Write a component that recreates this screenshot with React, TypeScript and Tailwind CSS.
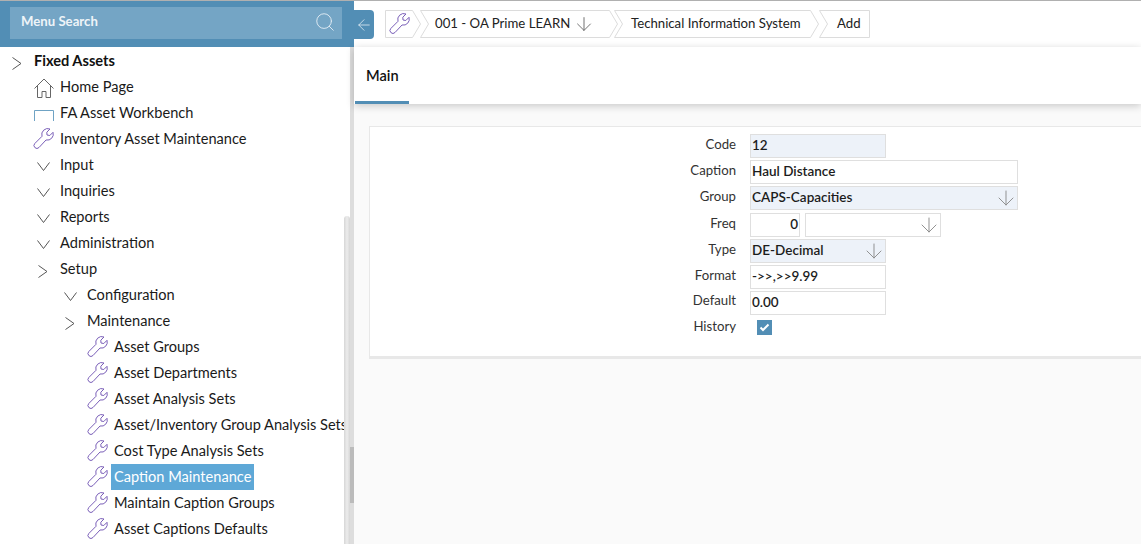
import React from "react";
import { ArrowDown, ArrowLeft, Search } from "lucide-react";

function WrenchIcon({ className }: { className?: string }) {
  return (
    <svg width="21" height="22" viewBox="0 0 21 22" fill="none" stroke="#7a5fb8" strokeWidth="1" className={`shrink-0 ${className ?? ""}`}>
      <path d="M17 1 L13.8 4.2 L14 7 L16.8 7.5 L20 4.3 A6 6 0 0 1 13 12 L6 19.5 A2.6 2.6 0 0 1 1.8 15.5 L9 8.3 A6 6 0 0 1 17 1 Z" />
    </svg>
  );
}

function HomeIcon() {
  return (
    <svg width="20" height="20" viewBox="0 0 20 20" fill="none" stroke="#666" strokeWidth="1" className="ml-[1px] mt-[2px]">
      <path d="M0.5 10.5 L10 1 L19.5 10.5" />
      <path d="M3.5 8 V19.5 H8 V13.5 H12 V19.5 H16.5 V8" />
    </svg>
  );
}

function BenchIcon() {
  return (
    <svg width="20" height="11" viewBox="0 0 20 11" fill="none" className="mt-[4px] ml-[1px]">
      <path d="M0.5 11 V0.5 H19.5 V11" stroke="#6fa3c4" strokeWidth="1" />
    </svg>
  );
}

function ChevRight({ className }: { className: string }) {
  return (
    <svg width="10" height="13" viewBox="0 0 10 13" fill="none" stroke="#555" strokeWidth="1" className={className}>
      <path d="M0.5 0.5 L9 6.5 L0.5 12.5" />
    </svg>
  );
}

function ChevDown({ className }: { className: string }) {
  return (
    <svg width="13" height="9" viewBox="0 0 13 9" fill="none" stroke="#555" strokeWidth="1" className={className}>
      <path d="M0.5 0.5 L6.5 8.5 L12.5 0.5" />
    </svg>
  );
}

type RowProps = {
  level: number;
  icon: "right" | "down" | "wrench" | "home" | "bench";
  label: string;
  active?: boolean;
  bold?: boolean;
};

function Row({ level, icon, label, active, bold }: RowProps) {
  const pad = ["pl-[7px]", "pl-[33px]", "pl-[60px]", "pl-[87px]"][level];
  return (
    <div className={`flex h-[26px] items-center whitespace-nowrap ${pad}`}>
      <div className="flex h-full w-[27px] shrink-0 items-center">
        {icon === "right" && <ChevRight className="ml-[5px] mt-[4px]" />}
        {icon === "down" && <ChevDown className="ml-[4px] mt-[3px]" />}
        {icon === "wrench" && <WrenchIcon />}
        {icon === "home" && <HomeIcon />}
        {icon === "bench" && <BenchIcon />}
      </div>
      <span
        className={
          active
            ? "-ml-[3px] flex h-[26px] items-center bg-[#5ea8d7] px-[3px] text-[14.6px] text-white"
            : bold
              ? "text-[14.6px] font-bold text-[#111]"
              : "text-[14.6px] text-[#1a1a1a]"
        }
      >
        {label}
      </span>
    </div>
  );
}

function Crumb({ w, ml, first, last, children }: { w: number; ml?: string; first?: boolean; last?: boolean; children: React.ReactNode }) {
  const r = w - 0.5;
  const c = w - 8.5;
  const points = [
    "0.5,0.5",
    last ? `${r},0.5` : `${c},0.5`,
    ...(last ? [`${r},27.5`] : [`${r},14`, `${c},27.5`]),
    "0.5,27.5",
    ...(first ? [] : ["8.5,14"]),
  ].join(" ");
  return (
    <div className={`relative flex h-[28px] shrink-0 items-center ${ml ?? ""}`} style={{ width: w }}>
      <svg width={w} height="28" className="absolute left-0 top-0">
        <polygon points={points} fill="none" stroke="#dcdcdc" strokeWidth="1" />
      </svg>
      <div className="relative flex items-center whitespace-nowrap text-[13.2px] text-[#222]">{children}</div>
    </div>
  );
}

function Label({ up, children }: { up?: boolean; children: React.ReactNode }) {
  return (
    <div className={`w-[366px] shrink-0 text-right text-[13.2px] leading-[20px] text-[#333] ${up ? "-mt-[1px]" : ""}`}>{children}</div>
  );
}

function Field({ w, blue, right, children }: { w: string; blue?: boolean; right?: boolean; children?: React.ReactNode }) {
  return (
    <div
      className={`flex h-[24px] ${w} items-center border border-[#dfdfdf] pb-[2px] pl-[1px] pr-[1px] text-[13.5px] font-semibold text-[#1c1c1c] ${blue ? "bg-[#edf2f9]" : "bg-white"} ${right ? "justify-end" : ""}`}
    >
      {children}
    </div>
  );
}

function Select({ w, blue, children }: { w: string; blue?: boolean; children?: React.ReactNode }) {
  return (
    <div
      className={`flex h-[24px] ${w} items-center justify-between border border-[#dfdfdf] pl-[1px] text-[13.5px] font-semibold text-[#1c1c1c] ${blue ? "bg-[#edf2f9]" : "bg-white"}`}
    >
      <span className="-mt-[2px]">{children}</span>
      <ArrowDown size={24} strokeWidth={0.95} color="#8c8c8c" className="-mr-[1px] shrink-0" />
    </div>
  );
}

export default function App() {
  return (
    <div className="flex h-[544px] w-[1141px] flex-col overflow-hidden border-t border-[#b0b0b0] bg-white font-['Lato','Carlito','Liberation_Sans',sans-serif]">
      <div className="flex min-h-0 flex-1">
        <aside className="flex w-[354px] shrink-0 flex-col">
          <div className="flex h-[46px] shrink-0 items-start bg-[#528eb5] px-[10px] pt-[6px]">
            <div className="flex h-[32px] w-[332px] items-start justify-between bg-[#74a5c5] pl-[11px] pr-[6px] pt-[4px]">
              <span className="text-[13.2px] font-bold leading-[20px] text-[#eef4f8]">Menu Search</span>
              <Search size={22} strokeWidth={1} color="#e4eef5" />
            </div>
          </div>
          <div className="flex min-h-0 flex-1">
            <nav className="w-[344px] shrink-0 overflow-hidden pt-[1px]">
              <Row level={0} icon="right" label="Fixed Assets" bold />
              <Row level={1} icon="home" label="Home Page" />
              <Row level={1} icon="bench" label="FA Asset Workbench" />
              <Row level={1} icon="wrench" label="Inventory Asset Maintenance" />
              <Row level={1} icon="down" label="Input" />
              <Row level={1} icon="down" label="Inquiries" />
              <Row level={1} icon="down" label="Reports" />
              <Row level={1} icon="down" label="Administration" />
              <Row level={1} icon="right" label="Setup" />
              <Row level={2} icon="down" label="Configuration" />
              <Row level={2} icon="right" label="Maintenance" />
              <Row level={3} icon="wrench" label="Asset Groups" />
              <Row level={3} icon="wrench" label="Asset Departments" />
              <Row level={3} icon="wrench" label="Asset Analysis Sets" />
              <Row level={3} icon="wrench" label="Asset/Inventory Group Analysis Sets" />
              <Row level={3} icon="wrench" label="Cost Type Analysis Sets" />
              <Row level={3} icon="wrench" label="Caption Maintenance" active />
              <Row level={3} icon="wrench" label="Maintain Caption Groups" />
              <Row level={3} icon="wrench" label="Asset Captions Defaults" />
            </nav>
            <div className="w-[6px] shrink-0 pt-[169px]">
              <div className="h-full rounded-t-[3px] bg-gradient-to-r from-[#d6d6d6] via-[#ececec] to-[#d6d6d6]" />
            </div>
            <div className="w-[4px] shrink-0 bg-[#dddddd] pt-[400px]">
              <div className="h-[56px] bg-[#bbbbbb]" />
            </div>
          </div>
        </aside>

        <main className="flex min-w-0 flex-1 flex-col bg-[#fafafa]">
          <div className="flex h-[46px] shrink-0 items-start bg-white pt-[9px]">
            <button className="flex h-[29px] w-[20px] items-center justify-center rounded-r-[4px] bg-[#528eb5]">
              <ArrowLeft size={18} strokeWidth={1} color="#eaf2f7" />
            </button>
            <div className="ml-[11px] flex">
              <Crumb w={36} first>
                <WrenchIcon className="ml-[4px]" />
              </Crumb>
              <Crumb w={198} ml="-ml-[1px]">
                <span className="ml-[15px]">001 - OA Prime LEARN</span>
                <ArrowDown size={22} strokeWidth={1} color="#666" className="ml-[3px]" />
              </Crumb>
              <Crumb w={205} ml="-ml-[4px]">
                <span className="ml-[17px]">Technical Information System</span>
              </Crumb>
              <Crumb w={51} last>
                <span className="ml-[18px]">Add</span>
              </Crumb>
            </div>
          </div>

          <div className="relative flex h-[57px] shrink-0 items-end bg-white pl-[1px] shadow-[0_2px_8px_rgba(0,0,0,0.2)]">
            <div className="flex h-[57px] w-[54px] items-start border-b-[3px] border-[#528eb5] pl-[11px] pt-[18px] text-[14.6px] font-semibold text-[#111]">
              Main
            </div>
          </div>

          <div className="ml-[15px] mt-[22px] flex h-[233px] shrink-0 flex-col border-b-[3px] border-l border-t border-[#e8e8e8] bg-white pt-[7px]">
            <div className="flex h-[26px] items-start gap-[14px]">
              <Label>Code</Label>
              <Field w="w-[136px]" blue>12</Field>
            </div>
            <div className="flex h-[26px] items-start gap-[14px]">
              <Label>Caption</Label>
              <Field w="w-[268px]">Haul Distance</Field>
            </div>
            <div className="flex h-[27px] items-start gap-[14px]">
              <Label>Group</Label>
              <Select w="w-[268px]" blue>CAPS-Capacities</Select>
            </div>
            <div className="flex h-[26px] items-start gap-[14px]">
              <Label>Freq</Label>
              <div className="flex gap-[5px]">
                <Field w="w-[50px]" right>0</Field>
                <Select w="w-[136px]" />
              </div>
            </div>
            <div className="flex h-[26px] items-start gap-[14px]">
              <Label>Type</Label>
              <Select w="w-[136px]" blue>DE-Decimal</Select>
            </div>
            <div className="flex h-[26px] items-start gap-[14px]">
              <Label>Format</Label>
              <Field w="w-[136px]">-&gt;&gt;,&gt;&gt;9.99</Field>
            </div>
            <div className="flex h-[26px] items-start gap-[14px]">
              <Label up>Default</Label>
              <Field w="w-[136px]">0.00</Field>
            </div>
            <div className="flex h-[26px] items-start gap-[14px]">
              <Label up>History</Label>
              <div className="ml-[7px] mt-[3px] flex h-[15px] w-[15px] items-center justify-center bg-[#528eb5]">
                <svg width="11" height="9" viewBox="0 0 11 9" fill="none" stroke="#fff" strokeWidth="2">
                  <path d="M1.5 4.5 L4 7 L9.5 1.5" />
                </svg>
              </div>
            </div>
          </div>
        </main>
      </div>
    </div>
  );
}
